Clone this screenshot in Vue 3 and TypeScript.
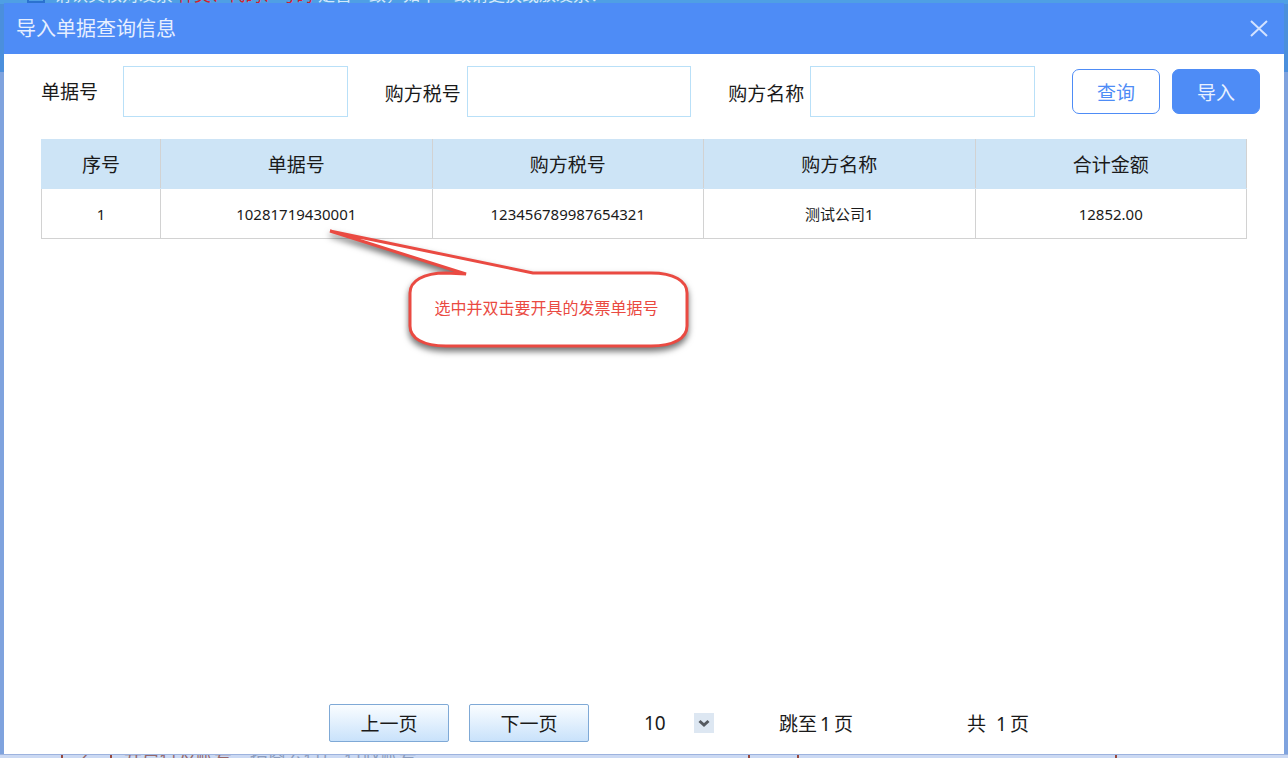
<script setup lang="ts">
import { ref } from 'vue'

interface Row {
  index: number
  bill: string
  taxNo: string
  name: string
  amount: string
}

const columns: string[] = ['序号', '单据号', '购方税号', '购方名称', '合计金额']
const rows: Row[] = [
  { index: 1, bill: '10281719430001', taxNo: '123456789987654321', name: '测试公司1', amount: '12852.00' },
]
const billNo = ref('')
const taxNo = ref('')
const buyer = ref('')
const pageSize = ref('10')
</script>

<template>
  <div class="screen">
    <div class="behind top">
      <span class="tick"></span>
      <span class="notice">请认真核对发票<b>种类、代码、号码</b>是否一致，如不一致请更换或放发票！</span>
    </div>
    <div class="behind bottom">
      <span class="under seq">2</span>
      <span class="under bank">开户行及账号：<i>招商公行广 行政账号</i></span>
      <span class="under rest"></span>
      <span class="under gap"></span>
    </div>

    <section class="dialog" role="dialog" aria-labelledby="dialog-title">
      <header class="title-bar">
        <h1 id="dialog-title">导入单据查询信息</h1>
        <button class="close" type="button" aria-label="关闭">
          <svg width="20" height="20" viewBox="0 0 20 20" aria-hidden="true">
            <path d="M2 2 18 17M18 2 2 17" fill="none" stroke="#d3e2ff" stroke-width="2" />
          </svg>
        </button>
      </header>

      <form class="search" @submit.prevent>
        <div class="field first">
          <label for="bill">单据号</label>
          <input id="bill" v-model="billNo" type="text" />
        </div>
        <div class="field">
          <label for="tax">购方税号</label>
          <input id="tax" v-model="taxNo" type="text" />
        </div>
        <div class="field">
          <label for="buyer">购方名称</label>
          <input id="buyer" v-model="buyer" type="text" />
        </div>
        <div class="actions">
          <button class="query" type="submit">查询</button>
          <button class="import" type="button">导入</button>
        </div>
      </form>

      <div class="grid">
        <table>
          <thead>
            <tr>
              <th v-for="c in columns" :key="c" scope="col">{{ c }}</th>
            </tr>
          </thead>
          <tbody>
            <tr v-for="r in rows" :key="r.index">
              <td>{{ r.index }}</td>
              <td>{{ r.bill }}</td>
              <td>{{ r.taxNo }}</td>
              <td>{{ r.name }}</td>
              <td>{{ r.amount }}</td>
            </tr>
          </tbody>
        </table>
        <div class="callout">
          <svg width="370" height="132" viewBox="0 0 370 132" aria-hidden="true">
            <path
              d="M212 48 H330 C353 48 366 56 366 68 V101 C366 113 353 121 330 121 H125 C102 121 89 113 89 101 V68 C89 56 102 48 125 48 L145 49 L9 6 Z"
              fill="#fff"
              stroke="#ea4a42"
              stroke-width="3"
              stroke-linejoin="bevel"
            />
          </svg>
          <p>选中并双击要开具的发票单据号</p>
        </div>
      </div>

      <footer class="pager">
        <button class="page" type="button">上一页</button>
        <button class="page" type="button">下一页</button>
        <div class="size">
          <select v-model="pageSize" aria-label="每页条数">
            <option>10</option>
            <option>20</option>
            <option>50</option>
          </select>
          <span class="arrow">
            <svg width="20" height="20" viewBox="0 0 20 20" aria-hidden="true">
              <path d="M5.500 8 10 12 14.500 8" fill="none" stroke="#555a60" stroke-width="3" />
            </svg>
          </span>
        </div>
        <span class="jump">跳至<span class="num">1</span>页</span>
        <span class="total">共<span class="num">1</span>页</span>
      </footer>
    </section>
  </div>
</template>

<style>
body {
  margin: 0;
  overflow: hidden;
}
</style>

<style scoped>
.screen {
  position: relative;
  box-sizing: border-box;
  height: 100vh;
  padding: 3px 4px 4px;
  overflow: hidden;
  background: linear-gradient(#4b8fdc 0 72px, #7fa3de 72px);
  font-family: "Noto Sans", "Noto Sans CJK SC", sans-serif;
  color: #1a1a1a;
}
.dialog {
  position: relative;
  display: flex;
  flex-direction: column;
  height: 100%;
  background: #fff;
}
.behind {
  position: absolute;
  left: 0;
  right: 0;
  overflow: hidden;
  white-space: nowrap;
}
.top {
  top: 0;
  height: 4px;
  background: #4f9fe4;
}
.tick {
  position: absolute;
  left: 27px;
  bottom: 1px;
  width: 14px;
  height: 14px;
  border: 2px solid #2b72cf;
}
.notice {
  position: absolute;
  left: 54px;
  bottom: -1px;
  font-size: 17px;
  line-height: 20px;
  color: #d3e8fd;
}
.notice b {
  margin: 0 5px 0 4px;
  font-weight: 400;
  color: #d8202c;
}
.bottom {
  bottom: 0;
  height: 4px;
  background: #cbd9f3;
  border-top: 1px solid #9db3de;
  box-sizing: border-box;
}
.under {
  position: absolute;
  top: -12px;
  box-sizing: border-box;
  height: 24px;
  border-left: 2px solid #96493f;
  font-size: 18px;
  line-height: 24px;
  color: #96696c;
}
.under i {
  font-style: normal;
  color: #8d9dbd;
}
.seq {
  left: 61px;
  width: 50px;
  padding-left: 16px;
}
.bank {
  left: 110px;
  width: 640px;
  padding-left: 12px;
  border-right: 2px solid #96493f;
}
.rest {
  left: 797px;
}
.gap {
  left: 1115px;
}
.title-bar {
  display: flex;
  align-items: center;
  justify-content: space-between;
  height: 51px;
  padding: 0 15px 0 12px;
  background: #4e8cf6;
}
h1 {
  margin: 0;
  font-size: 20px;
  font-weight: 400;
  line-height: 28px;
  color: #e6efff;
}
.close {
  display: flex;
  padding: 0;
  border: 0;
  background: none;
}
.search {
  display: flex;
  align-items: flex-start;
  padding: 12px 24px 0 37px;
}
.field {
  display: flex;
  align-items: center;
  flex: 1;
  min-width: 0;
  margin-right: 37px;
}
label {
  flex: none;
  width: 82px;
  padding-top: 5px;
  font-size: 19px;
  line-height: 28px;
}
.first label {
  padding-top: 1px;
}
input {
  flex: 1;
  min-width: 0;
  box-sizing: border-box;
  height: 51px;
  padding: 0 8px;
  border: 1px solid #b9e0f8;
  background: #fff;
  font: inherit;
  font-size: 18px;
}
.actions {
  display: flex;
  gap: 12px;
  padding-top: 3px;
}
.actions button {
  width: 88px;
  height: 45px;
  padding: 0;
  border: 1px solid #4e8cf6;
  border-radius: 7px;
  font-family: inherit;
  font-size: 19px;
}
.query {
  background: #fff;
  color: #4e8cf6;
}
.import {
  background: #4e8cf6;
  color: #e9f1ff;
}
.grid {
  position: relative;
  margin: 22px 37px 0;
}
table {
  width: 100%;
  border-collapse: collapse;
  table-layout: fixed;
}
th,
td {
  box-sizing: border-box;
  height: 49px;
  padding: 0;
  border: 1px solid #d2d2d2;
  text-align: center;
}
th {
  border-top-color: #cde4f6;
  border-bottom-color: #cde4f6;
  background: #cde4f6;
  font-size: 19px;
  font-weight: 400;
}
th:first-child {
  width: 119px;
  border-left-color: #cde4f6;
}
td {
  height: 50px;
  font-size: 15px;
}
.callout {
  position: absolute;
  left: 280px;
  top: 86px;
}
.callout svg {
  display: block;
  overflow: visible;
  filter: drop-shadow(0 4px 3px rgba(0, 0, 0, 0.55));
}
.callout p {
  position: absolute;
  left: 87px;
  top: 71px;
  width: 277px;
  margin: 0;
  font-size: 16px;
  line-height: 24px;
  text-align: center;
  color: #ea4a42;
}
.pager {
  display: flex;
  align-items: center;
  margin: auto 0 0;
  padding: 0 255px 12px 325px;
  font-size: 19px;
}
.page {
  width: 120px;
  height: 38px;
  margin-right: 20px;
  padding: 0;
  border: 1px solid #7fa9d6;
  border-radius: 2px;
  background: linear-gradient(#fafdff, #c9e2fb);
  color: #1a1a1a;
  font-family: inherit;
  font-size: 19px;
}
.size {
  position: relative;
  display: flex;
  align-items: center;
  width: 90px;
  margin-left: 35px;
}
select {
  width: 100%;
  height: 28px;
  padding: 0;
  border: 0;
  appearance: none;
  background: none;
  color: #1a1a1a;
  font-family: inherit;
  font-size: 19px;
}
.arrow {
  position: absolute;
  right: 20px;
  display: flex;
  background: #dde7f2;
  pointer-events: none;
}
.jump {
  margin-left: 45px;
}
.jump .num {
  margin: 0 3px;
}
.total {
  margin-left: auto;
}
.total .num {
  margin: 0 3px 0 10px;
}
</style>
